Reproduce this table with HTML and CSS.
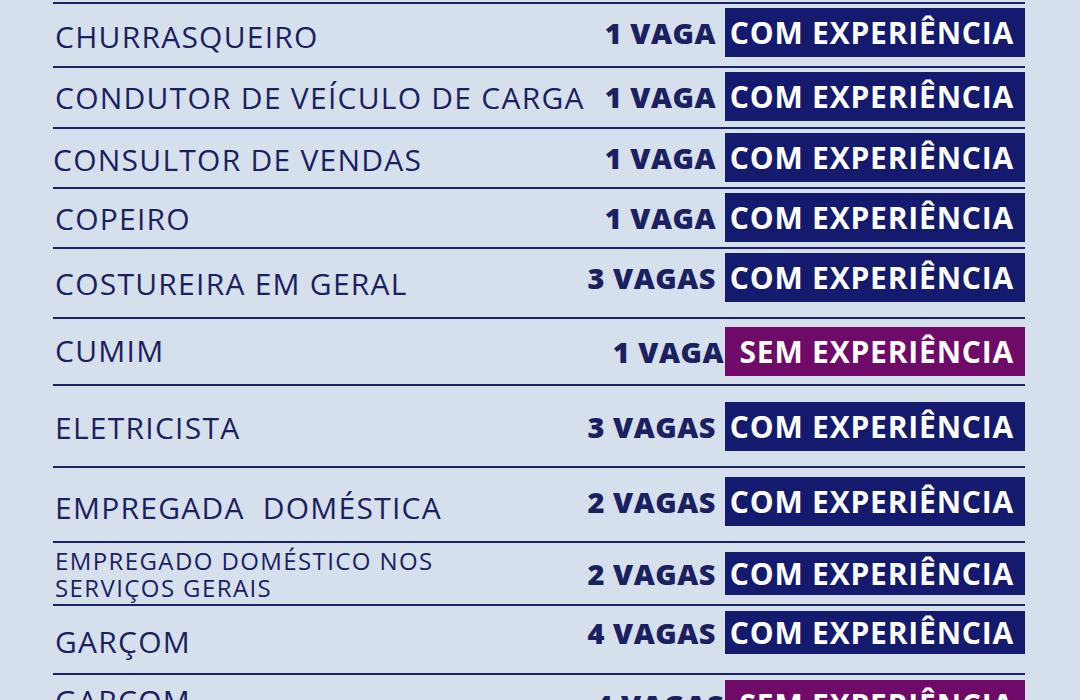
FILE: index.html
```html
<!DOCTYPE html>
<html lang="pt-BR">
<head>
<meta charset="utf-8">
<title>Vagas</title>
<link rel="stylesheet" href="styles.css">
</head>
<body>
<main class="board">
  <div class="row r1">
    <span class="role">CHURRASQUEIRO</span>
    <span class="qty">1 VAGA</span>
    <span class="tag">COM EXPERIÊNCIA</span>
  </div>
  <div class="row r2">
    <span class="role">CONDUTOR DE VEÍCULO DE CARGA</span>
    <span class="qty">1 VAGA</span>
    <span class="tag">COM EXPERIÊNCIA</span>
  </div>
  <div class="row r3">
    <span class="role role--left">CONSULTOR DE VENDAS</span>
    <span class="qty">1 VAGA</span>
    <span class="tag">COM EXPERIÊNCIA</span>
  </div>
  <div class="row r4">
    <span class="role">COPEIRO</span>
    <span class="qty">1 VAGA</span>
    <span class="tag">COM EXPERIÊNCIA</span>
  </div>
  <div class="row r5">
    <span class="role">COSTUREIRA EM GERAL</span>
    <span class="qty">3 VAGAS</span>
    <span class="tag">COM EXPERIÊNCIA</span>
  </div>
  <div class="row r6">
    <span class="role">CUMIM</span>
    <span class="qty qty--tight">1 VAGA</span>
    <span class="tag tag--sem">SEM EXPERIÊNCIA</span>
  </div>
  <div class="row r7">
    <span class="role">ELETRICISTA</span>
    <span class="qty">3 VAGAS</span>
    <span class="tag">COM EXPERIÊNCIA</span>
  </div>
  <div class="row r8">
    <span class="role">EMPREGADA&nbsp; DOMÉSTICA</span>
    <span class="qty">2 VAGAS</span>
    <span class="tag">COM EXPERIÊNCIA</span>
  </div>
  <div class="row r9">
    <span class="role role--small">EMPREGADO DOMÉSTICO NOS<br>SERVIÇOS GERAIS</span>
    <span class="qty">2 VAGAS</span>
    <span class="tag tag--short">COM EXPERIÊNCIA</span>
  </div>
  <div class="row r10">
    <span class="role">GARÇOM</span>
    <span class="qty">4 VAGAS</span>
    <span class="tag tag--short">COM EXPERIÊNCIA</span>
  </div>
  <div class="row r11">
    <span class="role">GARÇOM</span>
    <span class="qty qty--tight">4 VAGAS</span>
    <span class="tag tag--sem">SEM EXPERIÊNCIA</span>
  </div>
</main>
</body>
</html>
```
FILE: styles.css
```css
html, body {
  margin: 0;
  height: 700px;
  overflow: hidden;
}

body {
  background: #d6e0ec;
  color: #1b2160;
  font-family: "Open Sans", "Liberation Sans", sans-serif;
}

.board {
  width: 972px;
  margin-left: 53px;
  padding-top: 2px;
}

.row {
  display: grid;
  grid-template-columns: 1fr auto 300px;
  align-items: center;
  border-top: 2px solid #1b2266;
  box-sizing: border-box;
}

.r1 { height: 64px; }
.r2 { height: 61px; }
.r3 { height: 60px; }
.r4 { height: 60px; }
.r5 { height: 70px; }
.r6 { height: 67px; }
.r7 { height: 82px; }
.r8 { height: 75px; }
.r9 { height: 63px; }
.r10 { height: 69px; }
.r11 { height: 60px; }

.role {
  padding-left: 2px;
  font-size: 30px;
  font-weight: 400;
  letter-spacing: 1.25px;
  white-space: nowrap;
  color: #1b2160;
}

.role--left { padding-left: 0; }

.role--small {
  font-size: 24px;
  line-height: 27px;
  letter-spacing: 1.4px;
}

.qty {
  margin-right: 9px;
  font-size: 29px;
  font-weight: 800;
  letter-spacing: 0.5px;
  white-space: nowrap;
  color: #1b2160;
}

.qty--tight { margin-right: 1px; }

.tag {
  height: 49px;
  display: flex;
  align-items: center;
  justify-content: flex-end;
  padding-right: 11px;
  box-sizing: border-box;
  background: #141a6e;
  color: #ffffff;
  font-size: 30px;
  font-weight: 700;
  letter-spacing: 0.8px;
  white-space: nowrap;
}

.tag--sem { background: #6f0a68; }

.tag--short { height: 43px; }

/* per-row vertical nudges, as laid out on the original poster */
.r1 .role { margin-top: 2px; }
.r1 .qty, .r1 .tag { margin-bottom: 6px; }

.r2 .qty, .r2 .tag,
.r3 .qty, .r3 .tag,
.r4 .qty, .r4 .tag { margin-bottom: 2px; }
.r3 .role { margin-top: 2px; }

.r5 .qty, .r5 .tag { margin-bottom: 11px; }

.r6 .role { margin-bottom: 3px; }

.r7 .role { margin-top: 2px; }

.r8 .role { margin-top: 6px; }
.r8 .qty, .r8 .tag { margin-bottom: 6px; }

.r10 .role { margin-top: 3px; }
.r10 .qty, .r10 .tag { margin-bottom: 15px; }

.r11 .role { margin-bottom: 7px; }
```
